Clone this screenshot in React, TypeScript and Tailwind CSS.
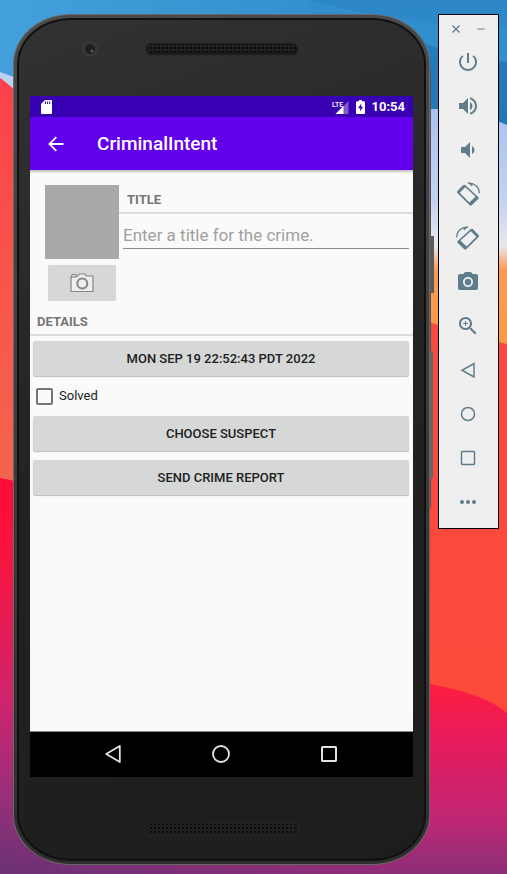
import type { ReactNode } from "react";

function Wallpaper() {
  return (
    <svg
      aria-hidden="true"
      className="absolute inset-0 h-full w-full"
      viewBox="0 0 507 874"
      preserveAspectRatio="none"
    >
      <defs>
        <linearGradient id="sky" x1="0" y1="0" x2="1" y2="0">
          <stop offset="0" stopColor="#43a0dc" />
          <stop offset="1" stopColor="#2b86c5" />
        </linearGradient>
        <linearGradient id="midSky" x1="0" y1="0" x2="0" y2="70" gradientUnits="userSpaceOnUse">
          <stop offset="0" stopColor="#2c86c6" />
          <stop offset="1" stopColor="#3391d0" />
        </linearGradient>
        <linearGradient id="deepSky" x1="0" y1="40" x2="0" y2="125" gradientUnits="userSpaceOnUse">
          <stop offset="0" stopColor="#257cba" />
          <stop offset="1" stopColor="#2377b5" />
        </linearGradient>
        <linearGradient id="haze" x1="0" y1="105" x2="0" y2="340" gradientUnits="userSpaceOnUse">
          <stop offset="0" stopColor="#a9c0f0" />
          <stop offset="0.4" stopColor="#c3d2f0" />
          <stop offset="0.6" stopColor="#e9e7ee" />
          <stop offset="0.7" stopColor="#f99a55" />
          <stop offset="1" stopColor="#f99a45" />
        </linearGradient>
        <linearGradient id="leftRed" x1="0" y1="80" x2="0" y2="490" gradientUnits="userSpaceOnUse">
          <stop offset="0" stopColor="#fb414c" />
          <stop offset="0.5" stopColor="#f9564a" />
          <stop offset="1" stopColor="#f3644e" />
        </linearGradient>
        <linearGradient id="leftDusk" x1="0" y1="480" x2="0" y2="874" gradientUnits="userSpaceOnUse">
          <stop offset="0" stopColor="#ff0c36" />
          <stop offset="0.2" stopColor="#f81440" />
          <stop offset="0.55" stopColor="#d0246e" />
          <stop offset="0.8" stopColor="#98307a" />
          <stop offset="1" stopColor="#6b3274" />
        </linearGradient>
        <linearGradient id="rightRed" x1="0" y1="320" x2="0" y2="720" gradientUnits="userSpaceOnUse">
          <stop offset="0" stopColor="#f84a41" />
          <stop offset="1" stopColor="#fc4a3a" />
        </linearGradient>
        <linearGradient id="rightDusk" x1="0" y1="680" x2="0" y2="874" gradientUnits="userSpaceOnUse">
          <stop offset="0" stopColor="#ff1d40" />
          <stop offset="0.35" stopColor="#e41c5e" />
          <stop offset="0.7" stopColor="#c22674" />
          <stop offset="1" stopColor="#8c2e78" />
        </linearGradient>
        <linearGradient id="duskBlend" x1="0" y1="0" x2="1" y2="0">
          <stop offset="0" stopColor="#fff" stopOpacity="0" />
          <stop offset="0.7" stopColor="#fff" />
        </linearGradient>
        <mask id="duskMask">
          <rect width="507" height="874" fill="url(#duskBlend)" />
        </mask>
      </defs>
      <rect width="507" height="874" fill="url(#sky)" />
      <path d="M310 0C370 18 440 26 507 27V0z" fill="url(#midSky)" />
      <path d="M310 0C370 18 440 26 507 27V130H310z" fill="#318fce" />
      <path d="M400 34C440 50 470 60 507 62V130H400z" fill="url(#deepSky)" />
      <path d="M0 72L60 94V140H0z" fill="#bcd2f5" />
      <path d="M250 109H445C470 110 490 118 507 125V350H250z" fill="url(#haze)" />
      <path d="M0 78C12 86 24 100 60 130V500H0z" fill="url(#leftRed)" />
      <path d="M250 280C400 310 450 330 507 344V760H250z" fill="url(#rightRed)" />
      <path d="M0 478C30 482 60 500 100 520L250 640V874H0z" fill="url(#leftDusk)" />
      <rect y="780" width="507" height="94" fill="url(#leftDusk)" />
      <path
        d="M0 640C300 660 400 670 430 684C460 690 490 698 507 713V874H0z"
        fill="url(#rightDusk)"
        mask="url(#duskMask)"
      />
    </svg>
  );
}

function SpeakerGrille() {
  return (
    <svg width="154" height="14" viewBox="0 0 154 14" aria-hidden="true">
      <defs>
        <pattern id="holes" width="4" height="4" patternUnits="userSpaceOnUse">
          <rect width="4" height="4" fill="#202020" />
          <rect x="1" y="1" width="2" height="2" fill="#0b0b0b" />
        </pattern>
      </defs>
      <rect x="0.5" y="1" width="153" height="12.5" rx="6" fill="#191919" stroke="#303030" strokeWidth="0.6" />
      <rect x="3" y="2" width="148" height="10" rx="4" fill="url(#holes)" />
    </svg>
  );
}

function StatusBar() {
  return (
    <div className="flex h-[21px] items-center bg-[#3700b3] pr-2 pl-[11px] text-white">
      <svg width="11" height="14" viewBox="0 0 11 14" aria-label="SD card">
        <path d="M4 0H10Q11 0 11 1V13Q11 14 10 14H1Q0 14 0 13V4z" fill="#fff" />
        <path d="M4.500 1.500V4M6.600 1.500V4M8.700 1.500V4" stroke="#3700b3" strokeWidth="1" />
      </svg>
      <svg className="ml-auto" width="17" height="14" viewBox="0 0 17 14" aria-label="LTE signal">
        <path d="M16.500 1V14H3.500z" fill="#fff" opacity="0.35" />
        <path d="M11.500 6V14H3.500z" fill="#fff" />
        <rect width="10" height="7.500" fill="#3700b3" />
        <text x="0" y="7" fontSize="7" fontWeight="500" fill="#fff">LTE</text>
      </svg>
      <svg className="ml-[7px]" width="9" height="14" viewBox="0 0 9 14" aria-label="Battery charging">
        <path d="M3 0H6V1.300H8Q9 1.300 9 2.300V13Q9 14 8 14H1Q0 14 0 13V2.300Q0 1.300 1 1.300H3z" fill="#fff" />
        <path d="M5.200 3.500L2 8.200H4.200V11.500L7 6.800H5.200z" fill="#3700b3" />
      </svg>
      <time className="ml-[7px] text-[13px] leading-5 font-bold">10:54</time>
    </div>
  );
}

function SectionHeader({ className, children }: { className: string; children: ReactNode }) {
  return (
    <h2 className={`border-b-2 border-[#dcdcdc] text-[13px] font-bold text-[#757575] ${className}`}>
      {children}
    </h2>
  );
}

function FormButton({ children }: { children: ReactNode }) {
  return (
    <button
      type="button"
      className="block h-[35px] w-full rounded-xs bg-[#d6d7d7] text-[13px] font-medium text-[#212121] shadow-[0_1px_1px_#00000040]"
    >
      {children}
    </button>
  );
}

function CrimeForm() {
  return (
    <form className="min-h-[562px] border-b border-[#8a8a8a] bg-[#fafafa] shadow-[inset_0_3px_2px_-1px_#00000038]">
      <div className="flex pt-[15px] pl-[15px]">
        <div className="flex flex-col items-center">
          <div role="img" aria-label="Crime photo" className="size-[74px] bg-[#a9a9a9]" />
          <button
            type="button"
            aria-label="Take photo"
            className="mt-1.5 flex h-9 w-[68px] items-center justify-center rounded-xs bg-[#d6d7d7] shadow-[0_0_1px_#00000025]"
          >
            <svg width="24" height="20" viewBox="0 0 24 20" fill="#eeeeee" stroke="#858585" strokeWidth="1.200" strokeLinejoin="round">
              <path d="M1 18.500V4L2.500 1.500H6V3H8L9.500 1H15L16 3H23V18.500z" />
              <path d="M1 4H7" />
              <circle cx="12.300" cy="10.500" r="5" strokeWidth="2" />
            </svg>
          </button>
        </div>
        <div className="min-w-0 flex-1">
          <SectionHeader className="h-[29px] pl-2 leading-[30px]">
            <label htmlFor="crime-title">TITLE</label>
          </SectionHeader>
          <div className="px-1 pt-2">
            <input
              id="crime-title"
              type="text"
              placeholder="Enter a title for the crime."
              className="block h-[27px] w-full border-b border-[#8c8c8c] bg-transparent text-[17px] outline-none placeholder:text-[#a0a0a0]"
            />
          </div>
        </div>
      </div>
      <SectionHeader className="mt-2 h-[27px] pl-[7px] leading-[26px]">DETAILS</SectionHeader>
      <div className="pt-[5px] pr-1 pl-[3px]">
        <FormButton>MON SEP 19 22:52:43 PDT 2022</FormButton>
        <div className="flex h-10 items-center">
          <input
            id="solved"
            type="checkbox"
            className="ml-[3px] size-[17px] appearance-none rounded-xs border-2 border-[#757575] checked:bg-[#757575]"
          />
          <label htmlFor="solved" className="pl-1.5 text-[13px] text-[#212121]">
            Solved
          </label>
        </div>
        <div className="flex flex-col gap-[9px]">
          <FormButton>CHOOSE SUSPECT</FormButton>
          <FormButton>SEND CRIME REPORT</FormButton>
        </div>
      </div>
    </form>
  );
}

function NavigationBar() {
  return (
    <nav className="flex h-[45px] items-center justify-center gap-[84px] bg-black pr-px pb-px">
      <button type="button" aria-label="Back">
        <svg width="24" height="24" viewBox="0 0 24 24" fill="none" stroke="#e3e3e3" strokeWidth="1.800" strokeLinejoin="round">
          <path d="M18.800 4V20L5.200 12z" />
        </svg>
      </button>
      <button type="button" aria-label="Home">
        <svg width="24" height="24" viewBox="0 0 24 24" fill="none" stroke="#e3e3e3" strokeWidth="1.800">
          <circle cx="12" cy="12" r="8" />
        </svg>
      </button>
      <button type="button" aria-label="Overview">
        <svg width="24" height="24" viewBox="0 0 24 24" fill="none" stroke="#e3e3e3" strokeWidth="2">
          <rect x="5" y="5" width="14" height="14" rx="0.500" />
        </svg>
      </button>
    </nav>
  );
}

function Phone() {
  return (
    <div className="relative min-w-0 flex-1 self-start">
      <div className="absolute top-14 -right-px h-[438px] w-2 bg-[#555]" />
      <div className="absolute top-[222px] -right-1 h-[57px] w-2 bg-[#5b5b5b]" />
      <div className="absolute top-[337px] -right-[3px] h-[127px] w-2 bg-[#666]" />
      <div className="relative rounded-[58px/50px] border border-[#686868] bg-linear-to-b from-[#4a4a4a] to-[#2e2e2e] p-[3px]">
        <div className="rounded-[54px/46px] border-2 border-[#101010] bg-linear-160 from-[#323232] via-[#222222] via-50% to-[#1d1d1d] px-[11px]">
          <div className="relative flex h-[76px] justify-center pt-[22px]">
            <svg className="absolute top-5 left-[51px]" width="18" height="18" viewBox="0 0 18 18" aria-hidden="true">
              <circle cx="9" cy="9" r="8" fill="#383838" />
              <circle cx="9" cy="9" r="5" fill="#1f1c22" />
              <circle cx="11" cy="11" r="1.500" fill="#65505f" />
            </svg>
            <SpeakerGrille />
          </div>
          <StatusBar />
          <header className="flex h-[53px] items-center bg-[#6200ee] pl-[17px] text-white">
            <button type="button" aria-label="Navigate up">
              <svg width="18" height="16" viewBox="0 0 18 16" fill="none" stroke="#fff" strokeWidth="1.900">
                <path d="M16.500 8H2.800M9.300 1.200L2.500 8L9.300 14.800" />
              </svg>
            </button>
            <h1 className="pl-8 text-[19px] leading-6 font-medium">CriminalIntent</h1>
          </header>
          <CrimeForm />
          <NavigationBar />
          <div className="flex h-[82px] justify-center pt-[45px]">
            <SpeakerGrille />
          </div>
        </div>
      </div>
    </div>
  );
}

function ToolButton({ label, children }: { label: string; children: ReactNode }) {
  return (
    <button type="button" aria-label={label} className="flex h-11 w-full items-center justify-center pr-px">
      <svg width="24" height="24" viewBox="0 0 24 24" fill="#607d8b">
        {children}
      </svg>
    </button>
  );
}

function RotateGlyph() {
  return (
    <>
      <path
        fillRule="evenodd"
        d="M7.200 3.100Q8.200 2.200 9.200 3.100L22.300 15Q23.200 16 22.300 17L15.700 23.200Q14.700 24 13.700 23.200L1.400 11Q0.500 10 1.400 9zM9.200 5.200L3.700 10.700L13.400 20.400L19.600 14.600z"
      />
      <path d="M20 15L13.800 20.800L14.700 22L21.200 16z" />
      <path d="M12 1.200C18.500 0.800 23.300 5 23.300 11.200" fill="none" stroke="#607d8b" strokeWidth="1.300" />
      <path d="M11.500 0.600L17 1.300L16 4.400z" />
    </>
  );
}

function EmulatorToolbar() {
  return (
    <aside className="w-[61px] shrink-0 self-start border border-black bg-[#efefef] pb-1">
      <div className="flex h-[25px] items-center justify-between px-3 pt-0.5">
        <button type="button" aria-label="Close">
          <svg width="10" height="10" viewBox="0 0 10 10" stroke="#607d8b" strokeWidth="1.300">
            <path d="M1.500 1.500L8.500 8.500M8.500 1.500L1.500 8.500" />
          </svg>
        </button>
        <button type="button" aria-label="Minimize">
          <svg width="10" height="10" viewBox="0 0 10 10" stroke="#8fa4ae" strokeWidth="1.500">
            <path d="M1.500 5H8.500" />
          </svg>
        </button>
      </div>
      <ToolButton label="Power">
        <path d="M13 3h-2v10h2V3zm4.830 2.170l-1.420 1.420C17.990 7.860 19 9.810 19 12c0 3.870-3.130 7-7 7s-7-3.130-7-7c0-2.190 1.010-4.140 2.580-5.420L6.170 5.170C4.230 6.820 3 9.260 3 12c0 4.970 4.030 9 9 9s9-4.030 9-9c0-2.740-1.230-5.180-3.170-6.830z" />
      </ToolButton>
      <ToolButton label="Volume up">
        <path d="M3 9v6h4l5 5V4L7 9H3zm13.500 3c0-1.770-1.020-3.290-2.500-4.030v8.050c1.480-.730 2.500-2.250 2.500-4.020zM14 3.230v2.060c2.890.860 5 3.540 5 6.710s-2.110 5.850-5 6.710v2.060c4.010-.910 7-4.490 7-8.770s-2.990-7.860-7-8.770z" />
      </ToolButton>
      <ToolButton label="Volume down">
        <path d="M18.500 12c0-1.770-1.020-3.290-2.500-4.030v8.050c1.480-.730 2.500-2.250 2.500-4.020zM5 9v6h4l5 5V4L9 9H5z" />
      </ToolButton>
      <ToolButton label="Rotate left">
        <RotateGlyph />
      </ToolButton>
      <ToolButton label="Rotate right">
        <g transform="translate(24 0) scale(-1 1)">
          <RotateGlyph />
        </g>
      </ToolButton>
      <ToolButton label="Take screenshot">
        <path d="M9 2L7.170 4H4c-1.100 0-2 .900-2 2v12c0 1.100.900 2 2 2h16c1.100 0 2-.900 2-2V6c0-1.100-.900-2-2-2h-3.170L15 2H9zm3 15c-2.760 0-5-2.240-5-5s2.240-5 5-5 5 2.240 5 5-2.240 5-5 5z" />
        <circle cx="12" cy="12" r="3.200" />
      </ToolButton>
      <ToolButton label="Zoom">
        <path d="M15.500 14h-.790l-.280-.270C15.410 12.590 16 11.110 16 9.500 16 5.910 13.090 3 9.500 3S3 5.910 3 9.500 5.910 16 9.500 16c1.610 0 3.090-.590 4.230-1.570l.270.280v.790l5 4.990L20.490 19l-4.990-5zm-6 0C7.010 14 5 11.990 5 9.500S7.010 5 9.500 5 14 7.010 14 9.500 11.990 14 9.500 14z" />
        <path d="M12 10h-2v2H9v-2H7V9h2V7h1v2h2v1z" />
      </ToolButton>
      <ToolButton label="Back">
        <path d="M18 5.500V19L6 12.250z" fill="none" stroke="#607d8b" strokeWidth="1.500" />
      </ToolButton>
      <ToolButton label="Home">
        <circle cx="12" cy="12" r="6.500" fill="none" stroke="#607d8b" strokeWidth="1.500" />
      </ToolButton>
      <ToolButton label="Overview">
        <rect x="5.500" y="5.500" width="13" height="13" rx="0.800" fill="none" stroke="#607d8b" strokeWidth="1.500" />
      </ToolButton>
      <ToolButton label="More">
        <circle cx="6" cy="12" r="2" />
        <circle cx="12" cy="12" r="2" />
        <circle cx="18" cy="12" r="2" />
      </ToolButton>
    </aside>
  );
}

export default function App() {
  return (
    <div className="relative min-h-screen overflow-hidden font-['Roboto',sans-serif]">
      <Wallpaper />
      <main className="relative flex gap-2 pt-3.5 pr-2 pb-2 pl-[13px]">
        <Phone />
        <EmulatorToolbar />
      </main>
    </div>
  );
}
